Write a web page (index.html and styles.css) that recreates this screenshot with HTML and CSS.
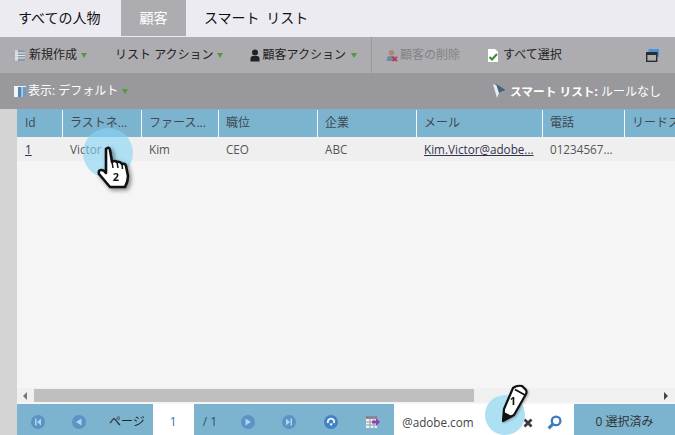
FILE: index.html
```html
<!DOCTYPE html>
<html>
<head>
    <title>顧客</title>
    <link rel="stylesheet" href="styles.css">
</head>
<body>
    <div id="tabs">
        <a class="tab first">すべての人物</a>
        <a class="tab active">顧客</a>
        <a class="tab">スマート リスト</a>
    </div>

    <div id="toolbar">
        <span class="tool t-new">
            <svg class="ico" viewBox="0 0 12 13"><rect x="1" y="1" width="10" height="11" rx="1.5" fill="#8d99a3"/><path d="M1 4h10M1 6.500h10M1 9h10" stroke="#e4e8ea" stroke-width="1"/><rect x="1" y="1" width="3" height="11" fill="#e8edf0" opacity=".7"/></svg>
            新規作成<i class="arrow"></i>
        </span>
        <span class="tool t-list">リスト アクション<i class="arrow"></i></span>
        <span class="tool t-act">
            <svg class="ico" viewBox="0 0 12 13"><circle cx="6" cy="3.600" r="3" fill="#222"/><path d="M1.500 12.500V9.500Q1.500 7 4 7H8Q10.500 7 10.500 9.500V12.500Z" fill="#222"/></svg>
            顧客アクション<i class="arrow"></i>
        </span>
        <span class="sep"></span>
        <span class="tool t-del off">
            <svg class="ico" viewBox="0 0 13 14"><circle cx="6" cy="4" r="3" fill="#a58a78"/><path d="M1 13V10Q1 7.500 4 7.500H8Q10 7.500 10 10V13Z" fill="#6f8aa5"/><path d="M7 8.500l5 4.500M12 8.500l-5 4.500" stroke="#c9304a" stroke-width="1.800"/></svg>
            顧客の削除
        </span>
        <span class="tool t-all">
            <svg class="ico" viewBox="0 0 12 13"><path d="M1 0H8L11 3V13H1Z" fill="#fff"/><path d="M2.500 8L5 10.500L10 5" fill="none" stroke="#3c8a2e" stroke-width="2"/></svg>
            すべて選択
        </span>
        <svg class="win" viewBox="0 0 13 13"><rect x="2.500" y="0" width="10.500" height="8" fill="#4b94dc"/><rect x=".7" y="3.700" width="10" height="8.600" fill="#adacb0" stroke="#2c2c2c" stroke-width="1.400"/><rect x="0" y="3" width="11.400" height="3" fill="#2c2c2c"/></svg>
    </div>

    <div id="viewbar">
        <span class="view">
            <svg class="ico" viewBox="0 0 12 11"><rect width="12" height="11" fill="#f2f5f8"/><rect x="4" y="1" width="3.500" height="10" fill="#4f86b8"/><rect x="8.500" y="1" width="3.500" height="10" fill="#6d9cc6"/></svg>
            <span>表示: デフォルト</span><i class="arrow"></i>
        </span>
        <span class="smart">
            <svg class="funnel" viewBox="0 0 14 16"><path d="M0 1L13 7L6 10L4 15Z" fill="#e6eef4"/><path d="M3 1L13 7L6 10Z" fill="#47647c"/></svg>
            <b>スマート リスト:</b> ルールなし
        </span>
    </div>

    <div id="main">
        <div id="gutter"></div>
        <div id="content">
            <div class="row head">
                <span class="c0">Id</span>
                <span class="c1">ラストネ...</span>
                <span class="c2">ファース...</span>
                <span class="c3">職位</span>
                <span class="c4">企業</span>
                <span class="c5">メール</span>
                <span class="c6">電話</span>
                <span class="c7">リードス</span>
            </div>
            <div class="row data">
                <span class="c0"><a>1</a></span>
                <span class="c1">Victor</span>
                <span class="c2">Kim</span>
                <span class="c3">CEO</span>
                <span class="c4">ABC</span>
                <span class="c5"><a>Kim.Victor@adobe...</a></span>
                <span class="c6">01234567...</span>
                <span class="c7"></span>
            </div>
            <div id="empty"></div>
            <div id="hscroll">
                <i class="sa left"></i>
                <div id="thumb"></div>
                <i class="sa right"></i>
            </div>
            <div id="pager">
                <svg class="pg p1" viewBox="0 0 14 14"><circle cx="7" cy="7" r="7" fill="#5a93c6"/><path d="M10 3.500V10.500L6 7ZM4 3.500H5.500V10.500H4Z" fill="#b9d3e6"/></svg>
                <svg class="pg p2" viewBox="0 0 14 14"><circle cx="7" cy="7" r="7" fill="#5a93c6"/><path d="M9.500 3.500V10.500L4 7Z" fill="#b9d3e6"/></svg>
                <span class="page-label">ページ</span>
                <span class="page-input">1</span>
                <span class="page-total">/ 1</span>
                <svg class="pg p3" viewBox="0 0 14 14"><circle cx="7" cy="7" r="7" fill="#5a93c6"/><path d="M4.500 3.500V10.500L10 7Z" fill="#b9d3e6"/></svg>
                <svg class="pg p4" viewBox="0 0 14 14"><circle cx="7" cy="7" r="7" fill="#5a93c6"/><path d="M4 3.500V10.500L8 7ZM8.500 3.500H10V10.500H8.500Z" fill="#b9d3e6"/></svg>
                <svg class="pg p5" viewBox="0 0 14 14"><circle cx="7" cy="7" r="7" fill="#3f83c4"/><path d="M4 8A3.200 3.200 0 1 1 10 8" fill="none" stroke="#fff" stroke-width="1.800"/><path d="M5.500 8.500H9L7 11Z" fill="#fff"/></svg>
                <svg class="pg p6" viewBox="0 0 14 12"><rect width="11" height="12" fill="#eef2f5"/><rect width="11" height="3" fill="#8d7f8c"/><path d="M0 6h11M0 9h11M4 0v12M8 0v12" stroke="#8b9bad" stroke-width="1"/><path d="M6 4.500H10V2L14 6L10 10V7.500H6Z" fill="#8e44ad"/></svg>
                <span class="search">@adobe.com
                    <svg class="clear" viewBox="0 0 10 10"><path d="M1.500 1.500L8.500 8.500M8.500 1.500L1.500 8.500" stroke="#3d3d3d" stroke-width="2.800"/></svg>
                    <svg class="lens" viewBox="0 0 14 14"><circle cx="8.500" cy="5.500" r="4" fill="none" stroke="#3c7cc0" stroke-width="2.200"/><path d="M5.500 8.500L1.500 12.500" stroke="#3c7cc0" stroke-width="2.800"/></svg>
                </span>
                <span class="selected">0 選択済み</span>
            </div>
        </div>
    </div>

    <div class="spot s-hand"></div>
    <div class="spot s-pen"></div>

    <svg class="hand" viewBox="0 0 36 44">
        <path d="M10 3Q13 0 14 4L16 16Q19 14 21 16Q24 15 26 18Q29 17 30 20L32 30Q32 36 29 41H14L3 28Q2 24 5 24Q8 24 10 27Z" fill="#fff" stroke="#111" stroke-width="2.600" stroke-linejoin="round"/>
        <path d="M16 16L17 22M21 16L22 22M26 18L26.500 23" stroke="#111" stroke-width="1.500"/>
        <text x="20" y="35" class="num">2</text>
    </svg>

    <svg class="pen" viewBox="0 0 30 40">
        <path d="M13 4Q17 1 22 2L26 6Q27 8 26 10L14 31L3 37L4 25Z" fill="#fff" stroke="#111" stroke-width="2.200" stroke-linejoin="round"/>
        <path d="M15 5.500L25 11" stroke="#111" stroke-width="1.800" fill="none"/>
        <path d="M3 37L4 28L12 32Z" fill="#111"/>
        <text x="13" y="21" class="num">1</text>
    </svg>
</body>
</html>
```

FILE: styles.css
```css
* {
    box-sizing: border-box;
}
html, body {
    margin: 0;
    padding: 0;
}
body {
    position: relative;
    width: 675px;
    height: 435px;
    overflow: hidden;
    background: #f5f5f5;
    font: 12px/1 "Open Sans", "Noto Sans CJK JP", sans-serif;
    color: #222;
}

#tabs {
    display: flex;
    height: 37px;
    background: #ecebf1;
}
.tab {
    height: 36px;
    padding: 0 18px;
    font-size: 14px;
    line-height: 36px;
    word-spacing: 3px;
    color: #111;
}
.tab.first {
    width: 121px;
}
.tab.active {
    width: 65px;
    padding: 0;
    text-align: center;
    background: #adacb0;
    color: #fff;
}

#toolbar {
    display: flex;
    align-items: center;
    height: 36px;
    background: #adacb0;
    color: #222;
}
.tool {
    display: flex;
    align-items: center;
    white-space: nowrap;
}
.ico {
    width: 12px;
    height: 13px;
    margin-right: 2px;
    flex: none;
}
.arrow {
    display: inline-block;
    width: 0;
    height: 0;
    margin-left: 4px;
    border-top: 5px solid #4f9a3a;
    border-left: 3px solid transparent;
    border-right: 3px solid transparent;
}
.t-new {
    margin-left: 14px;
}
.t-new .ico {
    margin-right: 3px;
}
.t-list {
    margin-left: 28px;
}
.t-list .arrow {
    margin-left: 3px;
}
.t-act {
    margin-left: 26px;
}
.t-act .arrow {
    margin-left: 5px;
}
.sep {
    width: 1px;
    height: 36px;
    margin-left: 14px;
    background: #9a999d;
}
.t-del {
    margin-left: 14px;
}
.off {
    color: #838286;
}
.t-all {
    margin-left: 27px;
}
.t-all .ico {
    margin-right: 4px;
}
.win {
    width: 13px;
    height: 13px;
    margin-left: auto;
    margin-right: 16px;
}

#viewbar {
    display: flex;
    align-items: center;
    justify-content: space-between;
    height: 36px;
    padding: 0 14px;
    background: #99989c;
    color: #fff;
}
.view {
    display: flex;
    align-items: center;
    white-space: nowrap;
}
.view .ico {
    height: 11px;
    margin-right: 2px;
}
.smart {
    display: block;
    white-space: nowrap;
    line-height: 16px;
}
.smart b {
    font-weight: 700;
    font-size: 11.7px;
}
.funnel {
    width: 14px;
    height: 16px;
    vertical-align: top;
}

#main {
    display: flex;
    height: 326px;
}
#gutter {
    width: 17px;
    background: #d4d4d4;
}
#content {
    display: flex;
    flex-direction: column;
    width: 658px;
    background: #f5f5f5;
}
.row {
    display: flex;
    flex: none;
    overflow: hidden;
}
.row span {
    flex: none;
    padding-left: 7px;
    white-space: nowrap;
}
.row .c0 {
    padding-left: 8px;
}
.head {
    height: 28px;
    background: #7cb4cf;
    color: #3d4a52;
}
.head span {
    height: 27px;
    margin-top: 1px;
    line-height: 26px;
    border-right: 1px solid #f4f8fa;
}
.data {
    height: 24px;
    background: #efefef;
    color: #555;
    font-size: 11.7px;
    line-height: 24px;
}
.data a {
    color: #33334d;
    text-decoration: underline;
}
.c0 { width: 46px; }
.c1 { width: 79px; }
.c2 { width: 77px; }
.c3 { width: 99px; }
.c4 { width: 99px; }
.c5 { width: 126px; }
.c6 { width: 82px; }
.c7 { width: 51px; border-right: 0 !important; }

#empty {
    flex: 1;
}
#hscroll {
    display: flex;
    align-items: center;
    flex: none;
    height: 14px;
    padding-top: 1px;
    background: #f0f0f0;
}
#thumb {
    width: 440px;
    height: 13px;
    margin-left: 7px;
    background: #bfbfbf;
}
.sa {
    display: block;
    width: 0;
    height: 0;
    border-top: 4px solid transparent;
    border-bottom: 4px solid transparent;
}
.sa.left {
    margin-left: 6px;
    border-right: 4px solid #777;
}
.sa.right {
    margin-left: auto;
    margin-right: 7px;
    border-left: 4px solid #444;
}

#pager {
    display: flex;
    align-items: center;
    flex: none;
    height: 31px;
    margin-top: 2px;
    padding-top: 4px;
    background: #7cb4cf;
    color: #222;
}
.pg {
    width: 14px;
    height: 14px;
    flex: none;
}
.p1 { margin-left: 14px; }
.p2 { margin-left: 27px; }
.page-label { margin-left: 23px; }
.page-input {
    width: 41px;
    height: 31px;
    margin-left: 8px;
    margin-top: -4px;
    background: #fff;
    color: #3d6f96;
    text-align: center;
    line-height: 36px;
}
.page-total {
    margin-left: 9px;
    color: #2f4f6a;
}
.p3 { margin-left: 24px; }
.p4 { margin-left: 27px; }
.p5 { margin-left: 28px; }
.p6 { margin-left: 28px; }
.search {
    position: relative;
    display: block;
    width: 180px;
    height: 31px;
    margin-left: 14px;
    margin-top: -4px;
    padding-left: 8px;
    background: #fff;
    color: #444;
    font-size: 11.7px;
    line-height: 36px;
}
.clear {
    position: absolute;
    left: 129px;
    top: 14px;
    width: 10px;
    height: 10px;
}
.lens {
    position: absolute;
    left: 153px;
    top: 11px;
    width: 15px;
    height: 15px;
}
.selected {
    flex: 1;
    text-align: center;
    color: #333;
}

.spot {
    position: absolute;
    width: 50px;
    height: 50px;
    border-radius: 50%;
    background: rgba(135, 213, 245, 0.62);
}
.s-hand {
    left: 83px;
    top: 128px;
}
.s-pen {
    left: 485px;
    top: 395px;
    width: 40px;
    height: 40px;
    background: #aee0f3;
}
.hand {
    position: absolute;
    left: 96px;
    top: 146px;
    width: 36px;
    height: 44px;
    filter: drop-shadow(2px 2px 2px rgba(0, 0, 0, 0.45));
}
.pen {
    position: absolute;
    left: 500px;
    top: 384px;
    width: 30px;
    height: 40px;
    filter: drop-shadow(1px 1px 1px rgba(0, 0, 0, 0.3));
}
.num {
    font: 700 11px "Open Sans", sans-serif;
    fill: #111;
    text-anchor: middle;
}
```
